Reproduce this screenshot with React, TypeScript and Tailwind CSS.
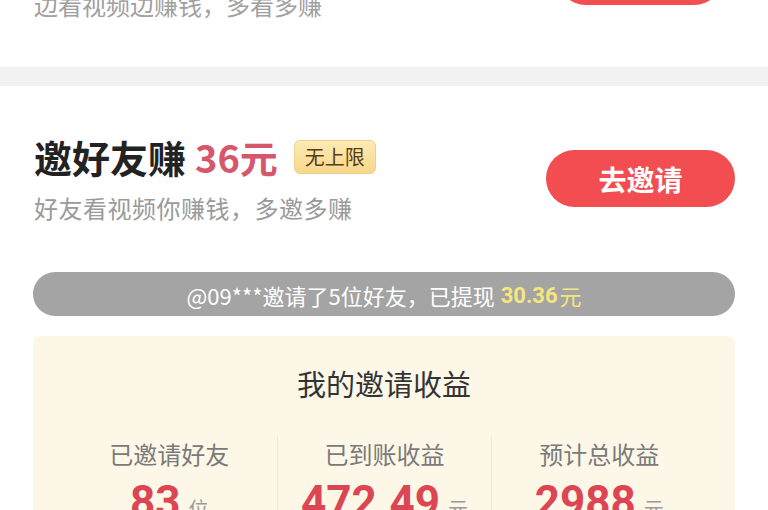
import * as React from "react";

const font = { fontFamily: '"Noto Sans CJK SC", "Noto Sans", sans-serif' };

function Stat({ label, value, unit, first }: { label: string; value: string; unit: string; first?: boolean }) {
  return (
    <div className={`flex flex-col items-center pt-[3px] ${first ? "" : "border-l border-[#f1e8d6]"}`}>
      <div className="text-[24px] leading-[30px] text-[#7a7a7a]">{label}</div>
      <div className="mt-[8px] flex items-baseline gap-[8px] text-[#dc4552]">
        <span className="text-[44px] font-bold leading-[50px] [font-family:Roboto,'Liberation_Sans',sans-serif]">{value}</span>
        <span className="text-[20px] text-[#9a9a9a]">{unit}</span>
      </div>
    </div>
  );
}

export default function App() {
  return (
    <div className="h-[510px] w-full overflow-hidden bg-white" style={font}>
      {/* previous card, scrolled mostly out of view */}
      <div className="flex h-[67px] items-start justify-between pl-[34px] pr-[45px]">
        <p className="-mt-[9px] text-[24px] leading-[28px] text-[#a0a0a0]">边看视频边赚钱，多看多赚</p>
        <div className="-mt-[53px] h-[58px] w-[166px] rounded-full bg-[#f24d50]" />
      </div>
      <div className="h-[19px] bg-[#f2f2f2]" />

      <div className="px-[33px]">
        <div className="flex items-start justify-between pt-[51px]">
          <div className="pl-px">
            <div className="flex h-[40px] items-center">
              <span className="text-[38px] font-bold leading-[40px] text-[#222]">邀好友赚</span>
              <span className="ml-[9px] text-[38px] font-bold leading-[40px] text-[#d6566b]">36元</span>
              <span className="ml-[16px] flex h-[34px] items-center rounded-[6px] border border-[#efd08a] bg-gradient-to-b from-[#fcebb3] to-[#f7d78d] px-[10px] text-[20px] text-[#5a3c12]">
                无上限
              </span>
            </div>
            <p className="mt-[16px] text-[24px] leading-[30px] tracking-[0.5px] text-[#9a9a9a]">好友看视频你赚钱，多邀多赚</p>
          </div>
          <button className="mt-[13px] flex h-[57px] w-[189px] items-center justify-center rounded-full bg-[#f24d50] text-[28px] font-bold text-white">
            去邀请
          </button>
        </div>

        <div className="mt-[49px] flex h-[44px] items-center justify-center rounded-full bg-[#a4a4a4] pt-[3px] text-[22px] text-white">
          <span>@09***邀请了5位好友，已提现</span>
          <span className="ml-[6px] font-bold text-[#f6e67e] [font-family:Roboto,sans-serif]">30.36</span>
          <span className="ml-[2px] text-[#f6e67e]">元</span>
        </div>

        <div className="mt-[20px] h-[200px] rounded-t-[8px] bg-[#fdf7e8] px-[29px]">
          <h2 className="pt-[29px] text-center text-[29px] leading-[36px] text-[#333]">我的邀请收益</h2>
          <div className="mt-[35px] grid grid-cols-3">
            <Stat label="已邀请好友" value="83" unit="位" first />
            <Stat label="已到账收益" value="472.49" unit="元" />
            <Stat label="预计总收益" value="2988" unit="元" />
          </div>
        </div>
      </div>
    </div>
  );
}
